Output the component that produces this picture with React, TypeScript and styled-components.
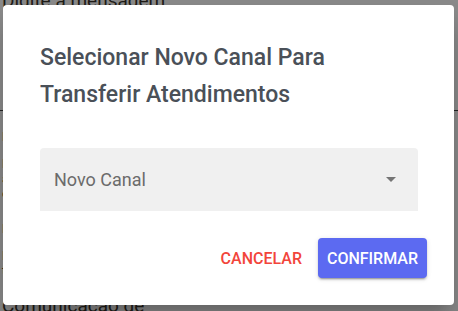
import React from "react";
import styled, { createGlobalStyle } from "styled-components";

const Global = createGlobalStyle`
  html, body { margin: 0; padding: 0; }
  body {
    width: 458px;
    height: 311px;
    overflow: hidden;
    font-family: Roboto, "Liberation Sans", sans-serif;
    background: #ffffff;
  }
`;

const Page = styled.div`
  position: relative;
  width: 458px;
  height: 311px;
  overflow: hidden;
  color: #3b352c;
  font-family: Roboto, sans-serif;
`;

const BgTop = styled.div`
  font-size: 19px;
  line-height: 20px;
  margin-top: -9px;
  padding-left: 2px;
`;

const BgRule = styled.div`
  margin-top: 99px;
  height: 1px;
  background: #444;
`;

const BgLines = styled.div`
  margin: 18px 0 0 2px;
  font-size: 13px;
  line-height: 15px;
  color: #5a4a2a;
`;

const BgLine = styled.div<{ $gap?: number }>`
  margin-top: ${(p) => p.$gap ?? 0}px;
`;

const BgBottom = styled.div`
  position: absolute;
  left: 2px;
  top: 294px;
  font-size: 19px;
`;

const Backdrop = styled.div`
  position: absolute;
  inset: 0;
  background: rgba(0, 0, 0, 0.46);
  display: flex;
  padding: 5px 4px 6px 3px;
  box-sizing: border-box;
`;

const Dialog = styled.div`
  flex: 1;
  background: #ffffff;
  border-radius: 4px;
  box-shadow: 0 11px 15px -7px rgba(0,0,0,0.2), 0 24px 38px 3px rgba(0,0,0,0.14);
  padding: 34px 36px 26px 37px;
  box-sizing: border-box;
  display: flex;
  flex-direction: column;
`;

const Title = styled.h2`
  margin: 0;
  font-family: Roboto, sans-serif;
  font-weight: 500;
  font-size: 23px;
  line-height: 37px;
  color: #4a5058;
`;

const SelectBox = styled.div`
  margin-top: 35px;
  height: 63px;
  background: #f0f0f0;
  border-radius: 4px 4px 0 0;
  display: flex;
  align-items: center;
  padding: 0 22px 0 14px;
  box-sizing: border-box;
`;

const SelectLabel = styled.span`
  flex: 1;
  font-size: 18px;
  color: #6b6b6b;
  font-family: Roboto, sans-serif;
`;

const Arrow = styled.span`
  width: 0;
  height: 0;
  border-left: 5px solid transparent;
  border-right: 5px solid transparent;
  border-top: 5px solid #757575;
`;

const Actions = styled.div`
  margin-top: 27px;
  display: flex;
  justify-content: flex-end;
  gap: 7px;
  margin-right: -9px;
`;

const Button = styled.button<{ $primary?: boolean }>`
  height: 40px;
  padding: 0 9px;
  border: none;
  border-radius: 4px;
  font-family: Roboto, sans-serif;
  font-weight: 500;
  font-size: 16px;
  letter-spacing: 0;
  text-transform: uppercase;
  cursor: pointer;
  background: ${(p) => (p.$primary ? "#5c6af1" : "transparent")};
  color: ${(p) => (p.$primary ? "#ffffff" : "#f2453b")};
  box-shadow: ${(p) =>
    p.$primary
      ? "0 3px 1px -2px rgba(0,0,0,0.2), 0 2px 2px 0 rgba(0,0,0,0.14), 0 1px 5px 0 rgba(0,0,0,0.12)"
      : "none"};
`;

export default function App() {
  return (
    <>
      <Global />
      <Page>
        <BgTop>Digite a mensagem</BgTop>
        <BgRule />
        <BgLines>
          <BgLine>Lorem</BgLine>
          <BgLine $gap={12}>Lorem</BgLine>
          <BgLine>ao</BgLine>
          <BgLine>o</BgLine>
          <BgLine $gap={20}>Lorem</BgLine>
          <BgLine $gap={12}>Lorem</BgLine>
          <BgLine>t</BgLine>
        </BgLines>
        <BgBottom>Comunicação de</BgBottom>
        <Backdrop>
          <Dialog>
            <Title>
              Selecionar Novo Canal Para
              <br />
              Transferir Atendimentos
            </Title>
            <SelectBox>
              <SelectLabel>Novo Canal</SelectLabel>
              <Arrow />
            </SelectBox>
            <Actions>
              <Button>Cancelar</Button>
              <Button $primary>Confirmar</Button>
            </Actions>
          </Dialog>
        </Backdrop>
      </Page>
    </>
  );
}
